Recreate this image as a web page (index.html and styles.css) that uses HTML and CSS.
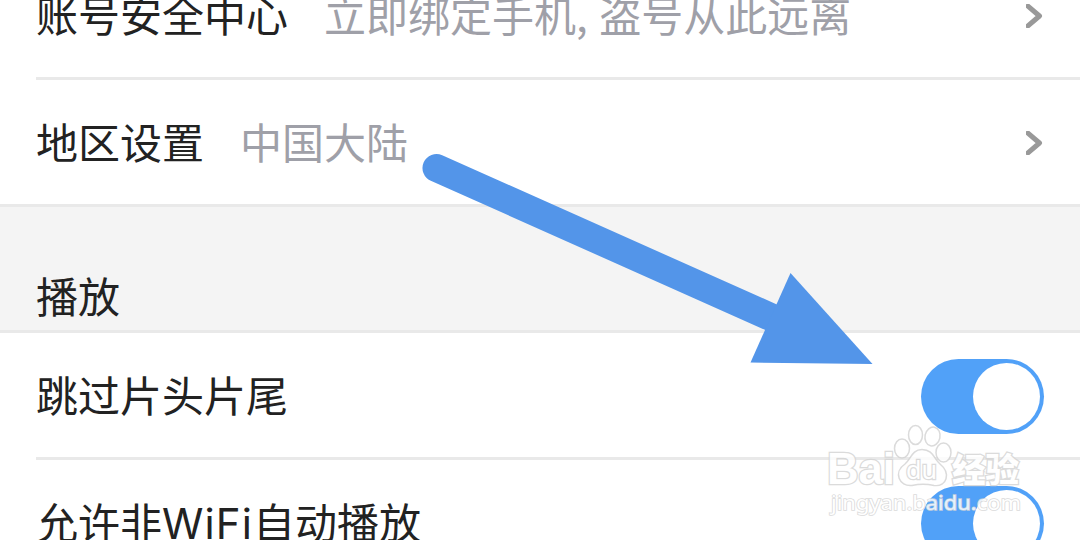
FILE: index.html
```html
<!DOCTYPE html>
<html lang="zh-CN">
<head>
  <meta charset="UTF-8">
  <title>设置</title>
  <link rel="stylesheet" href="styles.css">
</head>
<body>

<div class="settings">
  <!-- Account -->
  <div class="group group-account">
    <div class="row">
      <span class="label">账号安全中心</span>
      <span class="value">立即绑定手机<span class="comma">, </span>盗号从此远离</span>
      <svg class="chevron" width="18" height="24" viewBox="0 0 18 24"><path d="M0 0.500L13.500 12L0 23.500"/></svg>
    </div>
    <div class="row">
      <span class="label">地区设置</span>
      <span class="value">中国大陆</span>
      <svg class="chevron" width="18" height="24" viewBox="0 0 18 24"><path d="M0 0.500L13.500 12L0 23.500"/></svg>
    </div>
  </div>

  <!-- Playback -->
  <div class="group-title">播放</div>
  <div class="group">
    <div class="row">
      <span class="label">跳过片头片尾</span>
      <div class="switch"><div class="knob"></div></div>
    </div>
    <div class="row">
      <span class="label">允许非<span class="latin">WiFi</span>自动播放</span>
      <div class="switch"><div class="knob"></div></div>
    </div>
  </div>
</div>

<svg class="arrow" width="460" height="220" viewBox="420 150 460 220">
  <path class="shaft" d="M436.500 168L775 319"/>
  <path class="head" d="M790.500 273L872.500 364L750.500 362.500Z"/>
</svg>

<svg class="watermark" width="210" height="100" viewBox="820 420 210 100">
  <text class="brand" x="827" y="484" textLength="68" lengthAdjust="spacingAndGlyphs">Bai</text>
  <ellipse cx="902" cy="448.500" rx="7.500" ry="9.500"/>
  <ellipse cx="915.500" cy="435" rx="7" ry="9.500"/>
  <ellipse cx="932.500" cy="436.500" rx="7.500" ry="9.500" transform="rotate(12 932.500 436.500)"/>
  <ellipse cx="943.500" cy="452.500" rx="7.500" ry="9.500"/>
  <path d="M922 449.500C912 449.500 911 459 905 464C893 472 899 487 912 485.500C919 484 927 484 934 485.500C947 487 951 473 940 464C934 459 933 449.500 922 449.500Z"/>
  <text class="du" x="906" y="479" textLength="31" lengthAdjust="spacingAndGlyphs">du</text>
  <text class="jingyan" x="952" y="482" textLength="67" lengthAdjust="spacingAndGlyphs">经验</text>
  <text class="site" x="831" y="509.500" textLength="190" lengthAdjust="spacingAndGlyphs">jingyan.baidu.com</text>
</svg>

</body>
</html>
```

FILE: styles.css
```css
body {
  margin: 0;
  height: 540px;
  overflow: hidden;
  background: #fff;
  color: #222;
  font-family: "Noto Sans CJK SC", sans-serif;
  font-size: 42px;
  line-height: 60px;
}

.settings {
  height: 540px;
  overflow: hidden;
}

/* the list is scrolled, so the first row is cut at the top */
.group-account {
  margin-top: -47px;
  border-bottom: 3px solid #e9e9e9;
}

.row {
  display: flex;
  align-items: center;
  box-sizing: border-box;
  height: 124px;
  margin-left: 36px;
  padding-right: 36px;
  white-space: nowrap;
}

.row + .row {
  height: 127px;
  border-top: 3px solid #e9e9e9;
}

.label,
.value {
  margin-top: -2px;
}

.value {
  margin-left: 36px;
  color: #9fa0a8;
}

.comma {
  white-space: pre;
  letter-spacing: 1px;
}

.latin {
  font-family: Inter, sans-serif;
  font-size: 42px;
  letter-spacing: 1.1px;
  line-height: 1;
}

.chevron {
  margin-left: auto;
  margin-top: 2px;
  fill: none;
  stroke: #999;
  stroke-width: 5;
  stroke-linejoin: round;
}

.group-title {
  box-sizing: border-box;
  height: 126px;
  padding: 58px 36px 0;
  background: #f4f4f4;
  border-bottom: 3px solid #e9e9e9;
}

.switch {
  display: flex;
  align-items: center;
  justify-content: flex-end;
  box-sizing: border-box;
  width: 123px;
  height: 75px;
  margin-left: auto;
  margin-top: 3px;
  padding-right: 4px;
  border-radius: 38px;
  background: #51a1f8;
}

.knob {
  width: 67px;
  height: 67px;
  border-radius: 50%;
  background: #fff;
}

.arrow {
  position: absolute;
  left: 420px;
  top: 150px;
}

.shaft {
  stroke: #5395e9;
  stroke-width: 28;
  stroke-linecap: round;
}

.head {
  fill: #5395e9;
}

.watermark {
  position: absolute;
  left: 820px;
  top: 420px;
  fill: #fff;
  stroke: #d5d5d5;
  stroke-width: 1.5;
  opacity: 0.85;
}

.watermark text {
  paint-order: stroke;
  stroke-width: 2.5;
}

.brand {
  font: bold 44px "Liberation Sans", sans-serif;
}

.du {
  font: 26px "Noto Sans", sans-serif;
}

.jingyan {
  font: 900 33px "Noto Sans CJK SC", sans-serif;
}

.watermark .site {
  font: 20.5px "Noto Sans", sans-serif;
  stroke-width: 1.6;
}
```
